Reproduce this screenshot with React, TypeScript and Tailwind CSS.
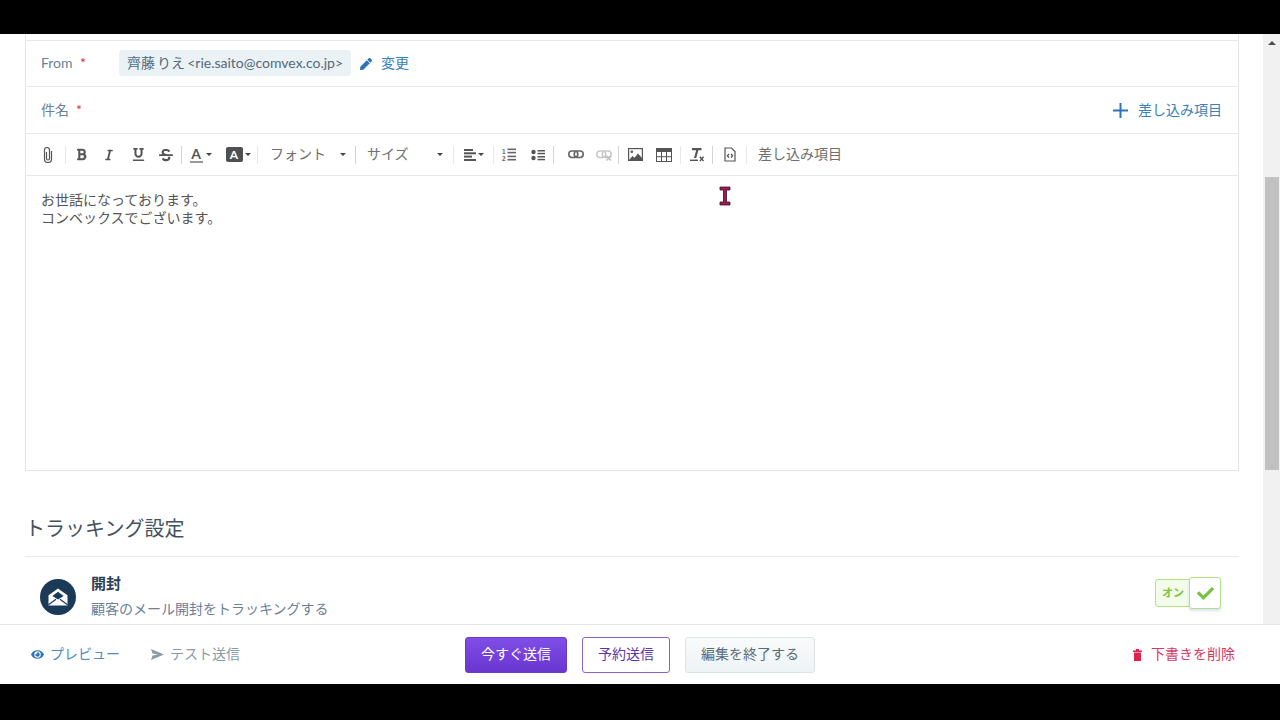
import { FaBold, FaCheck, FaEye, FaItalic, FaPen, FaStrikethrough, FaUnderline } from "react-icons/fa";

const jp = { fontFamily: 'Lato, "Noto Sans CJK JP", sans-serif' };

function Sep({ light = false }: { light?: boolean }) {
  return <div className={`h-[18px] w-px shrink-0 ${light ? "bg-[#e8e8e8]" : "bg-[#d4d4d4]"}`} />;
}

function Caret() {
  return <span className="ml-[2px] h-0 w-0 border-x-[3px] border-t-[3px] border-x-transparent border-t-[#444]" />;
}

function Tool({ w, children }: { w: number; children?: React.ReactNode }) {
  return (
    <div className="flex shrink-0 items-center justify-center text-[#555]" style={{ width: w }}>
      {children}
    </div>
  );
}

function Clip() {
  return (
    <svg width="10" height="16" viewBox="0 0 10 16" fill="none" stroke="#555" strokeWidth="1.2">
      <path d="M3.5 5v6.5a1.5 1.5 0 0 0 3 0V3a2.5 2.5 0 0 0-5 0v9a3.5 3.5 0 0 0 7 0V4" />
    </svg>
  );
}

function AlignIcon() {
  return (
    <svg width="12" height="12" viewBox="0 0 12 12" fill="#555">
      <rect y="0" width="9" height="2" />
      <rect y="3.3" width="12" height="2" />
      <rect y="6.6" width="8" height="2" />
      <rect y="10" width="12" height="2" />
    </svg>
  );
}

function OrderedList() {
  return (
    <svg width="14" height="13" viewBox="0 0 14 13" fill="#666">
      <text x="0" y="6" fontSize="6.5" fontWeight="700" fontFamily="Liberation Sans, sans-serif">1</text>
      <text x="0" y="13" fontSize="6.5" fontWeight="700" fontFamily="Liberation Sans, sans-serif">2</text>
      <rect x="5.5" y="0.5" width="8.5" height="1.6" />
      <rect x="5.5" y="3.8" width="8.5" height="1.6" />
      <rect x="5.5" y="7.6" width="8.5" height="1.6" />
      <rect x="5.5" y="10.9" width="8.5" height="1.6" />
    </svg>
  );
}

function UnorderedList() {
  return (
    <svg width="14" height="12" viewBox="0 0 14 12" fill="#555">
      <circle cx="2.5" cy="3" r="2.2" />
      <circle cx="2.5" cy="9" r="2.2" />
      <rect x="6.5" y="1" width="7.5" height="1.5" />
      <rect x="6.5" y="3.8" width="7.5" height="1.5" />
      <rect x="6.5" y="7" width="7.5" height="1.5" />
      <rect x="6.5" y="9.8" width="7.5" height="1.5" />
    </svg>
  );
}

function LinkIcon({ off = false }: { off?: boolean }) {
  const c = off ? "#c9c9c9" : "#666";
  return (
    <svg width="16" height="12" viewBox="0 0 16 12" fill="none" stroke={c} strokeWidth="1.6">
      <rect x="0.8" y="2" width="9" height="6.5" rx="3.2" />
      <rect x="6.2" y="2" width="9" height="6.5" rx="3.2" />
      {off && <path d="M10.5 7l4.5 4.5M15 7l-4.5 4.5" stroke="#bbb" strokeWidth="1.4" />}
    </svg>
  );
}

function ImageIcon() {
  return (
    <svg width="15" height="13" viewBox="0 0 15 13">
      <rect x="0.6" y="0.6" width="13.8" height="11.8" fill="#fff" stroke="#555" strokeWidth="1.2" />
      <circle cx="3.8" cy="3.8" r="1.3" fill="#555" />
      <path d="M1 12l3.5-4 2 1.8L10 5.5l4 4.5V12.5H1z" fill="#555" />
    </svg>
  );
}

function TableIcon() {
  return (
    <svg width="16" height="14" viewBox="0 0 16 14" fill="none" stroke="#555" strokeWidth="1">
      <rect x="0.5" y="0.5" width="15" height="13" />
      <rect x="0" y="0" width="16" height="4" fill="#555" stroke="none" />
      <path d="M5.5 4v9.5M10.5 4v9.5M0.5 8.7h15" />
    </svg>
  );
}

function ClearFormat() {
  return (
    <svg width="16" height="16" viewBox="0 0 16 16" fill="#555">
      <path d="M3 1h9.5v2.2H9.4L7.2 11H5L7.2 3.2H3z" />
      <rect x="1" y="12.6" width="8" height="1.4" />
      <path d="M10.3 10.2l1.1-.9 1.3 1.5 1.3-1.5 1.1.9-1.5 1.7 1.5 1.8-1.1.9-1.3-1.6-1.3 1.6-1.1-.9 1.5-1.8z" />
    </svg>
  );
}

function CodeFile() {
  return (
    <svg width="12" height="15" viewBox="0 0 12 15" fill="none" stroke="#555" strokeWidth="1.2">
      <path d="M1 1h6.5L11 4.5V14H1z" />
      <path d="M5 7L3.4 8.8 5 10.6M7 7l1.6 1.8L7 10.6" strokeWidth="1.3" />
    </svg>
  );
}

function OpenEnvelope() {
  return (
    <svg width="20" height="18" viewBox="0 0 20 18">
      <path d="M10 0.5L19.5 7.2V17.5H0.5V7.2z" fill="#fff" />
      <path d="M10 3.8L15.6 8 10 11.4 4.4 8z" fill="#1b3a57" />
      <path d="M0.5 16.8L8 11.2M19.5 16.8L12 11.2" stroke="#1b3a57" strokeWidth="1.2" fill="none" />
    </svg>
  );
}

function Toolbar() {
  return (
    <div className="flex h-[42px] items-center border-b border-[#e6eaee] pl-[8px]" style={jp}>
      <Tool w={27}><Clip /></Tool>
      <Tool w={4} />
      <Sep light />
      <Tool w={31}><FaBold size={13} /></Tool>
      <Tool w={23}><FaItalic size={12} /></Tool>
      <Tool w={36}><FaUnderline size={13} /></Tool>
      <Tool w={20}><FaStrikethrough size={14} /></Tool>
      <Tool w={5} />
      <Sep />
      <Tool w={37}>
        <span className="flex flex-col items-center text-[14px] leading-[13px] font-bold text-[#555]">
          A<span className="mt-px h-[2px] w-[13px] bg-[#999]" />
        </span>
        <span className="w-px" />
        <Caret />
      </Tool>
      <Tool w={38}>
        <span className="flex h-[15px] w-[17px] items-center justify-center rounded-[2px] bg-[#505050] text-[12px] font-bold text-white">A</span>
        <Caret />
      </Tool>
      <Sep light />
      <div className="flex w-[97px] shrink-0 items-center pl-[12px] text-[14px] text-[#6f6f6f]">
        <span className="w-[68px] pb-[2px]">フォント</span>
        <Caret />
      </div>
      <Sep />
      <div className="flex w-[97px] shrink-0 items-center pl-[11px] text-[14px] text-[#6f6f6f]">
        <span className="w-[68px] pb-[2px]">サイズ</span>
        <Caret />
      </div>
      <Sep light />
      <Tool w={39}><AlignIcon /><Caret /></Tool>
      <Sep light />
      <Tool w={30}><OrderedList /></Tool>
      <Tool w={28}><UnorderedList /></Tool>
      <Tool w={1} />
      <Sep />
      <Tool w={2} />
      <Tool w={40}><LinkIcon /></Tool>
      <Tool w={16}><LinkIcon off /></Tool>
      <Tool w={6} />
      <Sep />
      <Tool w={33}><ImageIcon /></Tool>
      <Tool w={23}><TableIcon /></Tool>
      <Tool w={5} />
      <Sep light />
      <Tool w={31}><ClearFormat /></Tool>
      <Sep />
      <Tool w={33}><CodeFile /></Tool>
      <Sep light />
      <span className="ml-[11px] pb-[2px] text-[14px] text-[#6f6f6f]">差し込み項目</span>
    </div>
  );
}

function TextCursor() {
  return (
    <svg width="12" height="20" viewBox="0 0 12 20" className="absolute top-[152px] left-[719px]">
      <path d="M1 1h10v3H7.5v12H11v3H1v-3h3.5V4H1z" fill="#ad1155" stroke="#222" strokeWidth="0.8" />
    </svg>
  );
}

export default function App() {
  return (
    <div className="flex h-[720px] w-[1280px] flex-col overflow-hidden bg-black text-[14px]" style={jp}>
      <div className="h-[34px] shrink-0" />
      <div className="relative flex h-[650px] flex-col bg-white">
        <div className="flex min-h-0 flex-1">
          <div className="min-w-0 flex-1 overflow-hidden pr-[24px] pl-[25px]">
            <div className="h-[437px] border-x border-b border-[#dfe5ea] pt-[6px]">
              <div className="flex h-[47px] items-center border-y border-[#e6eaee] pl-[15px]">
                <span className="w-[39px] pb-[2px] text-[#6b8196]">From</span>
                <span className="w-[39px] pb-[2px] text-[#d9274f]">*</span>
                <span className="mb-px flex h-[26px] items-center rounded-[3px] bg-[#eaf2f6] px-[8px] pb-[1px] text-[#55697a] [word-spacing:-1.5px]">
                  齊藤 りえ &lt;rie.saito@comvex.co.jp&gt;
                </span>
                <FaPen size={12} className="mr-[9px] ml-[9px] text-[#2b75b5]" />
                <span className="pb-[2px] text-[#3a7fb8]">変更</span>
              </div>
              <div className="flex h-[47px] items-center border-b border-[#e6eaee] pr-[16px] pl-[15px]">
                <span className="w-[35px] pb-[2px] text-[#6b8196]">件名</span>
                <span className="pb-[2px] text-[#d9274f]">*</span>
                <span className="flex-1" />
                <svg width="15" height="15" viewBox="0 0 15 15" className="mr-[10px]">
                  <path d="M7.5 0v15M0 7.5h15" stroke="#2b75b5" strokeWidth="2" />
                </svg>
                <span className="pb-[2px] text-[#3a7fb8]">差し込み項目</span>
              </div>
              <Toolbar />
              <div className="px-[15px] pt-[15px] text-[14px] leading-[18px] text-[#555]">
                <p>お世話になっております。</p>
                <p>コンベックスでございます。</p>
              </div>
            </div>
            <h2 className="mt-[43px] h-[42px] text-[20px] leading-[28px] text-[#40525f]">トラッキング設定</h2>
            <div className="flex border-t border-[#e6eaee] pt-[14px] pr-[18px] pl-[15px]">
              <div className="mt-[8px] flex h-[36px] w-[36px] items-center justify-center rounded-full bg-[#1b3a57]">
                <OpenEnvelope />
              </div>
              <div className="ml-[15px]">
                <div className="text-[15px] leading-[24px] font-bold text-[#2c3e50]">開封</div>
                <div className="mt-[2px] leading-[24px] text-[#6b8196]">顧客のメール開封をトラッキングする</div>
              </div>
              <span className="flex-1" />
              <div className="mt-[6px] flex items-start">
                <span className="mt-[2px] flex h-[28px] w-[36px] items-center justify-center rounded-l-[3px] border border-[#b5e08a] bg-[#f3fbe9] text-[11px] font-bold text-[#7cc242]">
                  オン
                </span>
                <span className="-ml-[2px] flex h-[32px] w-[32px] items-center justify-center rounded-[3px] border border-[#b5e08a] bg-white shadow-[0_2px_3px_rgba(120,160,220,0.3)]">
                  <FaCheck size={17} className="text-[#7cc242]" />
                </span>
              </div>
            </div>
          </div>
          <div className="flex w-[17px] shrink-0 flex-col items-center bg-[#f1f1f1]">
            <div className="mt-[7px] h-0 w-0 border-x-[4px] border-b-[4px] border-x-transparent border-b-[#505050]" />
            <div className="mt-[132px] h-[293px] w-[14px] bg-[#c1c1c1]" />
          </div>
        </div>
        <div className="flex h-[60px] shrink-0 items-center border-t border-[#e6e6e6] bg-white pr-[45px] pl-[30px]">
          <div className="flex w-[435px] items-center">
            <FaEye size={13} className="mr-[6px] ml-px text-[#2b75b5]" />
            <span className="w-[70px] pb-[2px] text-[#4d8bc0]">プレビュー</span>
            <svg width="13" height="11" viewBox="0 0 13 11" className="mr-[6px] ml-[31px]">
              <path d="M0 0l13 5.5L0 11l1.5-4.5L7 5.5 1.5 4.5z" fill="#8b9aa8" />
            </svg>
            <span className="pb-[2px] text-[#8b9aa8]">テスト送信</span>
          </div>
          <button className="h-[36px] w-[102px] rounded-[3px] border border-[#6a3bc9] bg-gradient-to-b from-[#7e4ee6] to-[#6a35d0] pb-[2px] text-white">今すぐ送信</button>
          <button className="ml-[15px] h-[36px] w-[88px] rounded-[3px] border border-[#8a63cf] bg-white pb-[2px] text-[#5a35a8]">予約送信</button>
          <button className="ml-[15px] h-[36px] w-[130px] rounded-[3px] border border-[#dde4e8] bg-gradient-to-b from-[#f9fbfb] to-[#eef3f5] pb-[2px] text-[#5a6b78]">編集を終了する</button>
          <span className="flex-1" />
          <svg width="9" height="12" viewBox="0 0 9 12" className="mr-[9px]">
            <path d="M0 1.5h9V3H0zM3 0h3v1.5H3zM1 3.5h7V12H1z" fill="#e0234e" />
          </svg>
          <span className="pb-[2px] text-[#d6395f]">下書きを削除</span>
        </div>
        <TextCursor />
      </div>
      <div className="flex-1" />
    </div>
  );
}
